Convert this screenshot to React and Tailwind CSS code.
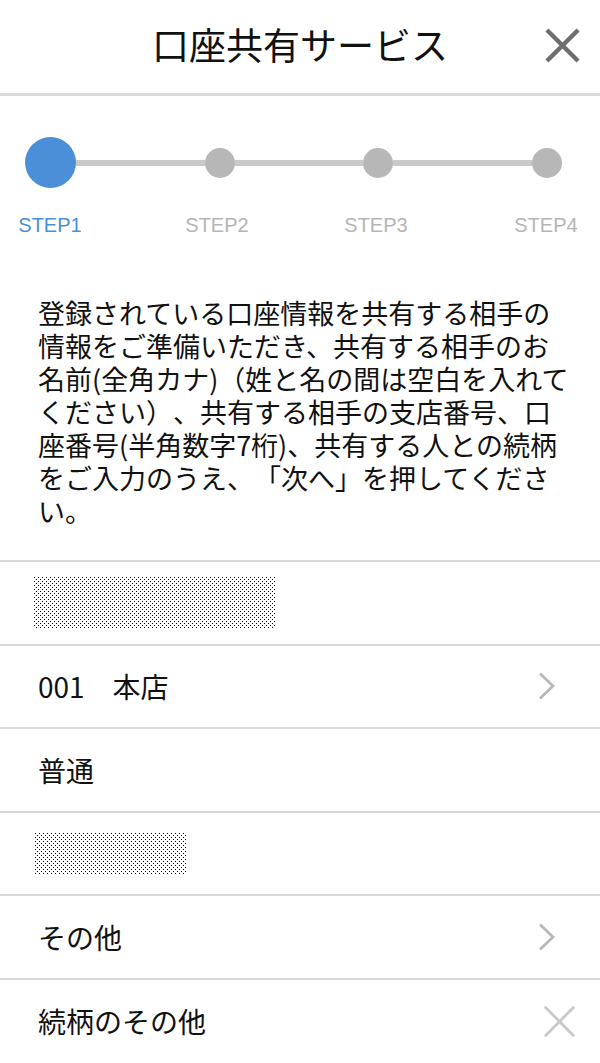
import React from "react";

const jp = "font-['Noto_Sans_CJK_JP',sans-serif]";

const masked =
  "bg-[radial-gradient(circle_at_0.5px_0.5px,#000_0.7px,transparent_0.8px),radial-gradient(circle_at_0.5px_0.5px,#000_0.7px,transparent_0.8px)] bg-[length:4px_4px] bg-[position:0_0,2px_2px]";

const CloseIcon = ({ className, stroke = 4 }) => (
  <svg viewBox="0 0 36 36" className={className} fill="none" stroke="currentColor" strokeWidth={stroke} strokeLinecap="butt">
    <path d="M2 2 L34 34 M34 2 L2 34" />
  </svg>
);

const Chevron = () => (
  <svg viewBox="0 0 18 28" className="w-[18px] h-[28px] text-[#b8b8b8]" fill="none" stroke="currentColor" strokeWidth="2.8">
    <path d="M2 1.5 L15 14 L2 26.5" />
  </svg>
);

const Header = () => (
  <div className="relative h-[96px] border-b-[3px] border-[#dcdcdc] flex items-center justify-center">
    <h1 className={`${jp} text-[37px] leading-none text-[#111] -mt-[4px]`}>口座共有サービス</h1>
    <CloseIcon className="absolute right-[20px] top-[28px] w-[35px] h-[35px] text-[#6e6e6e]" stroke={4.5} />
  </div>
);

const Stepper = () => (
  <div className="pt-[41px]">
    <div className="flex items-center pl-[25px]">
      <div className="w-[51px] h-[51px] rounded-full bg-[#4a8fd7]" />
      <div className="w-[129px] h-[6px] bg-[#c9c9c9]" />
      <div className="w-[30px] h-[30px] rounded-full bg-[#b7b7b7]" />
      <div className="w-[128px] h-[6px] bg-[#c9c9c9]" />
      <div className="w-[30px] h-[30px] rounded-full bg-[#b7b7b7]" />
      <div className="w-[139px] h-[6px] bg-[#c9c9c9]" />
      <div className="w-[30px] h-[30px] rounded-full bg-[#b7b7b7]" />
    </div>
    <div className="flex mt-[25px] font-['Liberation_Sans',sans-serif] text-[20px] leading-[24px] text-[#b5b5b5]">
      <span className="w-[100px] text-center text-[#4a8fd7]">STEP1</span>
      <span className="w-[100px] text-center ml-[67px]">STEP2</span>
      <span className="w-[100px] text-center ml-[59px]">STEP3</span>
      <span className="w-[100px] text-center ml-[70px]">STEP4</span>
    </div>
  </div>
);

const Row = ({ children, right, last }) => (
  <div className={`border-t-2 border-[#d8d8d8] flex items-center justify-between pl-[38px] pr-[44px] ${last ? "h-[85px]" : "h-[83.6px]"}`}>
    <div className={`${jp} text-[28px] leading-none text-[#111]`}>{children}</div>
    {right}
  </div>
);

export default function App() {
  return (
    <div className="w-[600px] h-[1063px] bg-white overflow-hidden">
      <Header />
      <Stepper />
      <p className={`${jp} text-[27px] leading-[33px] text-[#111] pl-[38px] w-[573px] mt-[59px] mb-[33px] [text-spacing-trim:space-all]`}>
        登録されている口座情報を共有する相手の<br />
        情報をご準備いただき、共有する相手のお<br />
        名前(全角カナ)（姓と名の間は空白を入れて<br />
        ください）、共有する相手の支店番号、口<br />
        座番号(半角数字7桁)、共有する人との続柄<br />
        をご入力のうえ、「次へ」を押してくださ<br />
        い。
      </p>
      <div>
        <Row>
          <div className={`w-[241px] h-[51px] -ml-[4px] ${masked}`} />
        </Row>
        <Row right={<Chevron />}>001　本店</Row>
        <Row>普通</Row>
        <Row>
          <div className={`w-[152px] h-[42px] -ml-[3px] ${masked}`} />
        </Row>
        <Row right={<Chevron />}>その他</Row>
        <Row last right={<CloseIcon className="w-[33px] h-[33px] text-[#c8c8c8] -mr-[20px]" stroke={3} />}>
          続柄のその他
        </Row>
      </div>
    </div>
  );
}
